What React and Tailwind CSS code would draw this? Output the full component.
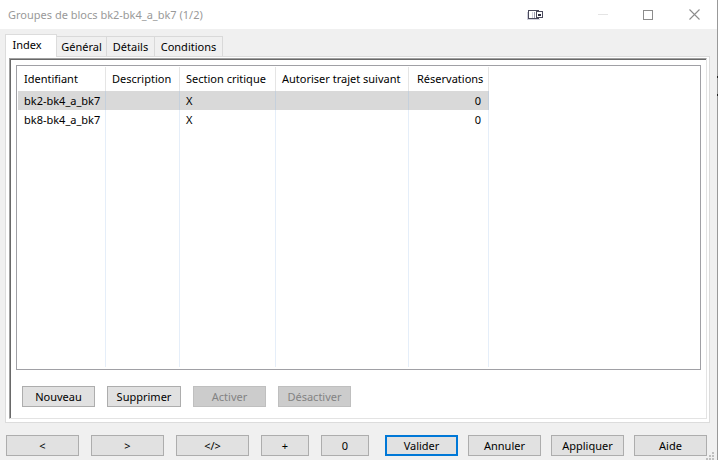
import React from 'react';

const tabs = ['Général', 'Détails', 'Conditions'];
const rows = ['bk2-bk4_a_bk7', 'bk8-bk4_a_bk7'];

function Button({ children, size = 'w-[73px]', primary = false, disabled = false }) {
  const look = disabled
    ? 'border border-[#bfbfbf] bg-[#cccccc] text-[#838383]'
    : primary
      ? 'border-2 border-[#0078d7] bg-[#e1e1e1]'
      : 'border border-[#adadad] bg-[#e1e1e1]';
  return (
    <button
      type="button"
      disabled={disabled}
      className={`flex h-[21px] shrink-0 items-center justify-center whitespace-nowrap ${size} ${look}`}
    >
      {children}
    </button>
  );
}

function TitleBar() {
  return (
    <header className="flex h-[29px] items-center bg-white pl-2 text-[#999999]">
      <h1 className="flex-1 whitespace-nowrap">Groupes de blocs bk2-bk4_a_bk7 (1/2)</h1>
      <svg className="mr-12 shrink-0" width="16" height="12" viewBox="0 0 16 12" shapeRendering="crispEdges" aria-hidden="true">
        <path d="M0 3h1v7h12v1H0z" fill="#d0d0dc" />
        <rect x="1.5" y="1.5" width="10" height="8" fill="#fff" stroke="#4a4a5c" />
        <path d="M5 3h1v6H5z" fill="#d0d0dc" />
        <path d="M7 3h1v6H7z" fill="#9c9cae" />
        <rect x="9.500" y="2.5" width="6" height="6" fill="#fff" stroke="#4a4a5c" />
        <rect x="11" y="5" width="3" height="2" fill="#2c2c40" />
      </svg>
      <button type="button" aria-label="Réduire" className="flex h-full w-[46px] items-center justify-start">
        <svg className="ml-[7px]" width="10" height="10" viewBox="0 0 10 10" aria-hidden="true">
          <path d="M0 4.500h10" stroke="#e4e4e4" />
        </svg>
      </button>
      <button type="button" aria-label="Agrandir" className="flex h-full w-[46px] items-center">
        <svg width="10" height="10" viewBox="0 0 10 10" className="ml-1.5" aria-hidden="true">
          <rect x="0.5" y="0.5" width="9" height="9" fill="none" stroke="#8c8c8c" />
        </svg>
      </button>
      <button type="button" aria-label="Fermer" className="flex h-full w-[34px] items-center">
        <svg width="11" height="11" viewBox="0 0 11 11" className="ml-1.5" aria-hidden="true">
          <path d="M.5.5l10 10M10.500.5l-10 10" stroke="#8c8c8c" strokeWidth="1.1" />
        </svg>
      </button>
    </header>
  );
}

function Tabs() {
  return (
    <div role="tablist" className="flex items-end pl-[5px]">
      <button
        type="button"
        role="tab"
        aria-selected="true"
        className="z-10 -mb-px h-[23px] w-[52px] border border-b-0 border-[#dcdcdc] bg-white pr-2 pb-[3px]"
      >
        Index
      </button>
      {tabs.map((name, i) => (
        <button
          key={name}
          type="button"
          role="tab"
          aria-selected="false"
          className={`h-5 border-t border-r border-[#d9d9d9] bg-[#f0f0f0] ${['w-[50px]', 'w-12', 'w-[68px]'][i]}`}
        >
          {name}
        </button>
      ))}
    </div>
  );
}

function BlockTable() {
  const head = 'border-r border-[#e5e5e5] text-left font-normal whitespace-nowrap';
  const cell = 'border-r border-[#e5eef9]';
  const selected = 'border-r border-[#c5d0dc]';
  return (
    <div className="flex flex-1 border border-[#a0a0a5] bg-white px-px pt-px pb-0.5">
      <table className="w-[471px] table-fixed border-separate border-spacing-0">
        <colgroup>
          <col className="w-[88px]" />
          <col className="w-[74px]" />
          <col className="w-24" />
          <col className="w-[133px]" />
          <col className="w-20" />
        </colgroup>
        <thead>
          <tr className="h-6">
            <th scope="col" className={`${head} pl-1.5`}>Identifiant</th>
            <th scope="col" className={`${head} pl-1.5`}>Description</th>
            <th scope="col" className={`${head} pl-1.5`}>Section critique</th>
            <th scope="col" className={`${head} pl-1.5`}>Autoriser trajet suivant</th>
            <th scope="col" className={`${head} pl-2`}>Réservations</th>
          </tr>
        </thead>
        <tbody>
          {rows.map((id, i) => {
            const edge = i === 0 ? selected : cell;
            return (
              <tr key={id} aria-selected={i === 0} className={i === 0 ? 'h-[19px] bg-[#d9d9d9]' : 'h-[19px]'}>
                <td className={`${edge} pl-1.5 whitespace-nowrap`}>{id}</td>
                <td className={edge} />
                <td className={`${edge} pl-1.5`}>X</td>
                <td className={edge} />
                <td className={`${edge} pr-[7px] text-right`}>0</td>
              </tr>
            );
          })}
          <tr aria-hidden="true">
            <td className={cell} />
            <td className={cell} />
            <td className={cell} />
            <td className={cell} />
            <td className={cell} />
          </tr>
        </tbody>
      </table>
    </div>
  );
}

export default function App() {
  return (
    <div className="relative flex min-h-screen flex-col border-r border-[#999999] bg-[#f0f0f0] font-['Noto_Sans','Open_Sans',sans-serif] text-[11px] leading-4 text-black">
      <TitleBar />
      <main className="flex flex-1 flex-col pt-[5px]">
        <Tabs />
        <section className="mr-[7px] ml-[5px] flex flex-1 flex-col border border-[#dcdcdc] bg-white pt-px pr-0.5 pb-[3px] pl-[3px]">
          <div className="flex flex-1 flex-col border border-t-[#a0a0a0] border-r-[#e3e3e3] border-b-[#e3e3e3] border-l-[#a0a0a0] pt-1.5 pr-[5px] pb-[11px] pl-1.5 shadow-[inset_1px_1px_0_#696969]">
            <BlockTable />
            <div className="mt-4 flex gap-3 pl-1.5">
              <Button>Nouveau</Button>
              <Button size="w-[74px]">Supprimer</Button>
              <Button disabled>Activer</Button>
              <Button disabled>Désactiver</Button>
            </div>
          </div>
        </section>
      </main>
      <footer className="flex justify-between pt-3 pr-2.5 pb-1 pl-1.5">
        <div className="flex gap-3">
          <Button>&lt;</Button>
          <Button>&gt;</Button>
          <Button>&lt;/&gt;</Button>
          <Button size="w-12">+</Button>
          <Button size="w-12">0</Button>
        </div>
        <div className="flex gap-2.5">
          <Button primary>Valider</Button>
          <Button>Annuler</Button>
          <Button>Appliquer</Button>
          <Button>Aide</Button>
        </div>
      </footer>
      <svg className="absolute right-[3px] bottom-0" width="8" height="8" viewBox="0 0 8 8" aria-hidden="true">
        <path d="M6 0h2v2H6zM3 3h2v2H3zM6 3h2v2H6zM0 6h2v2H0zM3 6h2v2H3zM6 6h2v2H6z" fill="#bfbfbf" />
      </svg>
      <svg className="absolute top-[76px] -right-px" width="1" height="20" viewBox="0 0 1 20" aria-hidden="true">
        <path d="M0 0h1v2H0zM0 18h1v2H0z" fill="#222" />
      </svg>
    </div>
  );
}
